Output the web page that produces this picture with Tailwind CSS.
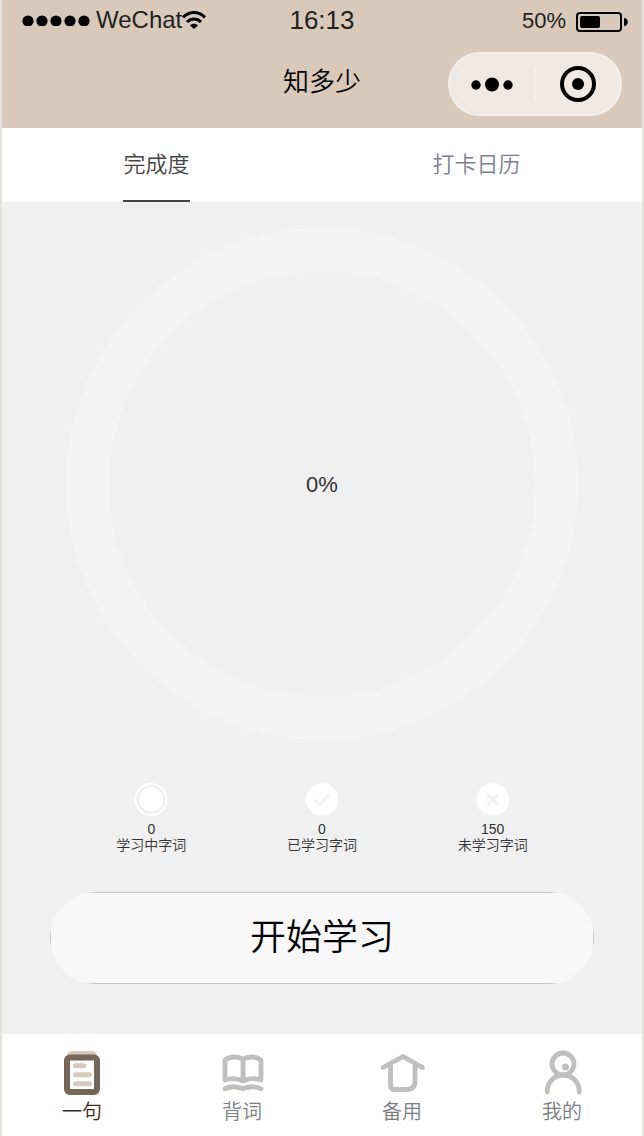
<!DOCTYPE html>
<html lang="zh-CN">
<head>
<meta charset="utf-8">
<meta name="viewport" content="width=device-width, initial-scale=1">
<title>知多少</title>
<script src="https://cdn.jsdelivr.net/npm/@tailwindcss/browser@4"></script>
</head>
<body class="bg-[#f0f0f0] font-['Liberation_Sans','Noto_Sans_CJK_SC',sans-serif] text-[#333333]">
<div class="flex min-h-screen flex-col border-x-2 border-[#e3e3de]">

  <header class="bg-[#d9c9ba]">
    <div class="grid h-10 grid-cols-3 items-center px-3.5 text-[#222222]">
      <div class="flex items-center pl-1.5">
        <svg class="h-3 w-[70px] shrink-0" viewBox="0 0 70 12" aria-hidden="true"><circle cx="6" cy="7" r="5.600"/><circle cx="20" cy="7" r="5.600"/><circle cx="34" cy="7" r="5.600"/><circle cx="48" cy="7" r="5.600"/><circle cx="62" cy="7" r="5.600"/></svg>
        <span class="ml-1 text-2xl">WeChat</span>
        <svg class="h-[18px] w-6 shrink-0" viewBox="0 0 24 18" fill="none" stroke="#000" stroke-width="3" aria-hidden="true"><path d="M1 6.500C7-.2 17-.2 23 6.500"/><path d="M5 11c4-4 10-4 14 0"/><path d="M8 14.500c2-2.300 6-2.300 8 0L12 18z" fill="#000" stroke="none"/></svg>
      </div>
      <span class="text-center text-[26px]">16:13</span>
      <div class="flex items-center justify-end gap-2">
        <span class="text-[22px]">50%</span>
        <svg class="mt-1 h-5 w-[54px]" viewBox="0 0 54 20" aria-hidden="true"><rect x="3" y="1" width="44" height="18" rx="3" fill="none" stroke="#000" stroke-width="2"/><rect x="6" y="4" width="20" height="12" rx="2"/><path d="M50 6c5 0 5 8 0 8z"/></svg>
      </div>
    </div>
    <div class="grid h-[88px] grid-cols-[1fr_auto_1fr] items-center px-5">
      <h1 class="col-start-2 pb-1 text-[26px] font-[350] text-black">知多少</h1>
      <div class="flex h-16 w-[174px] items-center justify-self-end rounded-full border-2 border-[#f4efec] bg-[#f0e8e3]">
        <button type="button" aria-label="更多" class="flex flex-1 justify-center"><svg class="h-4 w-11" viewBox="0 0 44 16"><circle cx="6" cy="9" r="4.700"/><circle cx="22" cy="8.500" r="7"/><circle cx="38" cy="9" r="4.700"/></svg></button>
        <span class="h-9 w-0.5 bg-[#f5f1ee]"></span>
        <button type="button" aria-label="关闭" class="flex flex-1 justify-center"><svg class="size-9" viewBox="0 0 36 36"><circle cx="18" cy="18" r="16" fill="none" stroke="#000" stroke-width="4"/><circle cx="18" cy="18" r="6"/></svg></button>
      </div>
    </div>
  </header>

  <nav class="flex h-[74px] justify-around bg-white text-[22px] font-[350]">
    <button type="button" class="border-b-2 border-[#444444] text-[#444444]">完成度</button>
    <button type="button" class="border-b-2 border-transparent text-[#7d7f8c]">打卡日历</button>
  </nav>

  <main class="flex flex-1 flex-col pb-[50px]">
    <div class="mx-16 mt-[26px] flex aspect-square items-center justify-center rounded-full border-[43px] border-[#f4f4f4] text-[22px]">0%</div>
    <div class="mx-16 mt-[42px] grid grid-cols-3 text-center text-sm leading-4">
      <div class="flex flex-col items-center">
        <svg class="mb-1 h-[35px] w-[34px]" viewBox="0 0 34 34" aria-hidden="true"><circle cx="17" cy="17" r="15.500" fill="none" stroke="#fff" stroke-width="2"/><circle cx="17" cy="17" r="12" fill="#fff"/></svg>
        <span>0</span><span class="font-[350]">学习中字词</span>
      </div>
      <div class="flex flex-col items-center">
        <svg class="mb-1 h-[35px] w-[34px]" viewBox="0 0 34 34" fill="none" aria-hidden="true"><circle cx="17" cy="17" r="16.300" fill="#fff"/><path d="M9.500 17l5 5 10-10.500" stroke="#f0f0f0" stroke-width="2.500"/></svg>
        <span>0</span><span class="font-[350]">已学习字词</span>
      </div>
      <div class="flex flex-col items-center">
        <svg class="mb-1 h-[35px] w-[34px]" viewBox="0 0 34 34" fill="none" aria-hidden="true"><circle cx="17" cy="17" r="16.300" fill="#fff"/><path d="M11.500 11.500l11 11m0-11l-11 11" stroke="#f0f0f0" stroke-width="2.500"/></svg>
        <span>150</span><span class="font-[350]">未学习字词</span>
      </div>
    </div>
    <button type="button" class="mx-12 mt-auto flex h-[92px] overflow-hidden rounded-full bg-[#f8f8f8] text-4xl font-[350] text-black">
      <span class="flex h-full w-full items-center justify-center border border-[#c6c6c6]">开始学习</span>
    </button>
  </main>

  <footer class="grid h-[102px] grid-cols-4 bg-white pt-4 text-xl leading-6 font-[350] text-[#7a7e83]">
    <a href="#sentence" class="flex flex-col items-center gap-1 text-[#3c2a20]">
      <svg class="h-[46px] w-12 shrink-0" viewBox="0 0 48 46" fill="none" aria-hidden="true"><path d="M9 5q1-4 5-4h20q4 0 5 4z" fill="#d9c9ba"/><rect x="9" y="7.500" width="30" height="34.500" rx="3" stroke="#766657" stroke-width="6"/><path d="M17.500 15.700h8M17.500 24.700h14M17.500 33.700h14" stroke="#d9c9ba" stroke-width="5" stroke-linecap="round"/></svg>
      <span>一句</span>
    </a>
    <a href="#words" class="flex flex-col items-center gap-1">
      <svg class="h-[46px] w-12 shrink-0" viewBox="0 0 48 46" fill="none" stroke="#bfbfbf" stroke-width="4.800" stroke-linecap="round" stroke-linejoin="round" aria-hidden="true"><path d="M25 9.500C20 6 11 6 7 10.500V30c6-2 12-2 18 1C31 28 37 28 43 30V10.500C39 6 30 6 25 9.500zV31M7 38.800c6-3 12-2.500 18 0 6-2.500 12-3 18 0"/></svg>
      <span>背词</span>
    </a>
    <a href="#spare" class="flex flex-col items-center gap-1">
      <svg class="h-[46px] w-12 shrink-0" viewBox="0 0 48 46" fill="none" stroke="#bfbfbf" stroke-width="4.800" stroke-linecap="round" stroke-linejoin="round" aria-hidden="true"><path d="M5 17.500L25 6.500 44.500 17.500M12.500 15v20q0 4.500 4 4.500h12q8.500 0 8.500-8.500V15"/></svg>
      <span>备用</span>
    </a>
    <a href="#mine" class="flex flex-col items-center gap-1">
      <svg class="h-[46px] w-12 shrink-0" viewBox="0 0 48 46" fill="none" stroke="#bfbfbf" stroke-width="4.800" stroke-linecap="round" aria-hidden="true"><circle cx="25" cy="14" r="11"/><circle cx="27.500" cy="17" r="3.400" fill="#bfbfbf" stroke="none"/><path d="M9.200 42V41a16 16 0 0 1 32 0v1"/></svg>
      <span>我的</span>
    </a>
  </footer>
</div>
</body>
</html>
